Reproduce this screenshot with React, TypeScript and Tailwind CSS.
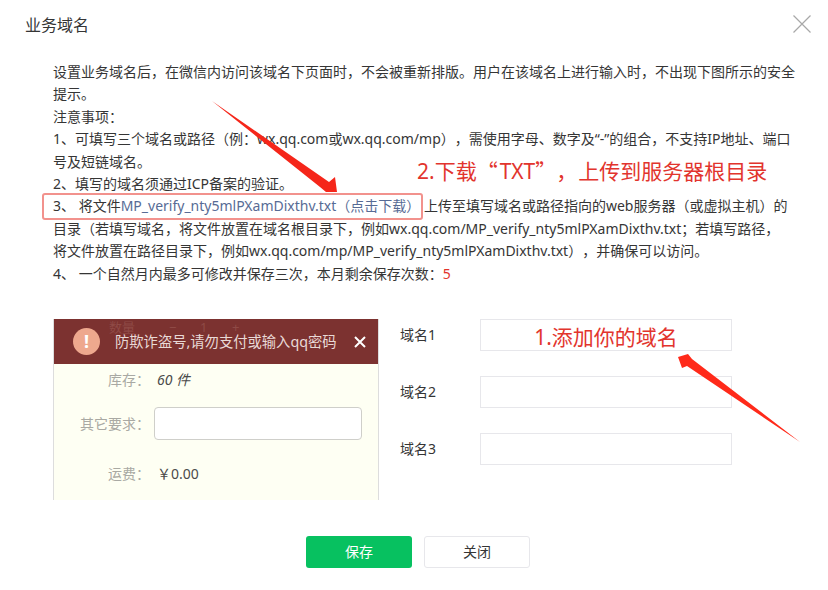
const font = { fontFamily: '"Noto Sans", "Noto Sans CJK SC", sans-serif' };
const cjkFont = { fontFamily: '"Noto Sans CJK SC", sans-serif' };

function DomainRow({ label, note }: { label: string; note?: string }) {
  return (
    <div className="flex items-center h-[32px]">
      <span className="w-[80px] text-[14px] text-[#353535] -mt-[2px]">{label}</span>
      <div className="w-[252px] h-[32px] border border-[#e7e7eb] bg-white flex items-center justify-center pt-[5px] text-[21px] text-[#e2342d]">
        {note}
      </div>
    </div>
  );
}

function Preview() {
  return (
    <div className="relative w-[326px] h-[181px] bg-[#fefff3] border-x border-[#dddddd] overflow-hidden">
      <div className="relative h-[45px] bg-[#7c3230] flex items-center pl-[19px] pr-[12px]">
        <div className="absolute left-[55px] top-[1px] flex text-[13px] leading-[14px] text-[#8f4a46]">
          <span className="w-[60px]">数量</span>
          <span className="w-[31px]">−</span>
          <span className="w-[32px]">1</span>
          <span>+</span>
        </div>
        <div className="relative w-[27px] h-[27px] rounded-full bg-[#eea88e] flex items-center justify-center text-white font-bold text-[18px]">!</div>
        <span className="relative ml-[15px] mt-[2px] text-[14.3px] leading-none text-[#e9d9d6]">防欺诈盗号,请勿支付或输入qq密码</span>
        <svg className="ml-auto" width="12" height="12" viewBox="0 0 12 12">
          <path d="M1 1 L11 11 M11 1 L1 11" stroke="#ffffff" strokeWidth="2" />
        </svg>
      </div>
      <div className="mt-[4px] flex items-center h-[22px] text-[14px]">
        <span className="w-[96px] text-right text-[#a9a9a3]">库存：</span>
        <span className="ml-[7px] text-[#4a4a4a] italic">60 件</span>
      </div>
      <div className="mt-[17px] flex items-center">
        <span className="w-[96px] text-right text-[14px] text-[#a9a9a3]">其它要求：</span>
        <div className="ml-[4px] w-[208px] h-[33px] rounded-[4px] border border-[#cfcfca] bg-white" />
      </div>
      <div className="mt-[22px] flex items-center h-[22px] text-[14px]">
        <span className="w-[96px] text-right text-[#a9a9a3]">运费：</span>
        <span className="ml-[7px] text-[#4a4a4a]">￥0.00</span>
      </div>
    </div>
  );
}

export default function App() {
  return (
    <div className="relative w-[828px] h-[590px] bg-white overflow-hidden [text-spacing-trim:space-all]" style={font}>
      <div className="flex items-start justify-between pl-[25px] pr-[17px] pt-[13px] h-[61px]">
        <h1 className="text-[16px] leading-[24px] text-[#353535] font-normal">业务域名</h1>
        <svg className="mt-[2px]" width="18" height="18" viewBox="0 0 18 18">
          <path d="M0.5 0.5 L17.5 17.5 M17.5 0.5 L0.5 17.5" stroke="#a8a8a8" strokeWidth="1.2" fill="none" />
        </svg>
      </div>

      <div className="pl-[53px] w-[800px] text-[14px] leading-[22.4px] text-[#353535]">
        <p>设置业务域名后，在微信内访问该域名下页面时，不会被重新排版。用户在该域名上进行输入时，不出现下图所示的安全</p>
        <p>提示。</p>
        <p>注意事项：</p>
        <p>1、可填写三个域名或路径（例：wx.qq.com或wx.qq.com/mp），需使用字母、数字及“-”的组合，不支持IP地址、端口</p>
        <p>号及短链域名。</p>
        <p>2、填写的域名须通过ICP备案的验证。</p>
        <p>
          3、 将文件<span className="text-[#576b95]">MP_verify_nty5mlPXamDixthv.txt（点击下载）</span> 上传至填写域名或路径指向的web服务器（或虚拟主机）的
        </p>
        <p>目录（若填写域名，将文件放置在域名根目录下，例如wx.qq.com/MP_verify_nty5mlPXamDixthv.txt；若填写路径，</p>
        <p>将文件放置在路径目录下，例如wx.qq.com/mp/MP_verify_nty5mlPXamDixthv.txt），并确保可以访问。</p>
        <p>
          4、 一个自然月内最多可修改并保存三次，本月剩余保存次数：<span className="text-[#e2342d]">5</span>
        </p>
      </div>

      <div className="flex pl-[53px] mt-[34px]">
        <Preview />
        <div className="ml-[21px] flex flex-col gap-[25px]">
          <DomainRow label="域名1" note="1.添加你的域名" />
          <DomainRow label="域名2" />
          <DomainRow label="域名3" />
        </div>
      </div>

      <div className="flex justify-center gap-[12px] mt-[36px] pl-[8px]">
        <button className="w-[106px] h-[32px] pb-[2px] rounded-[3px] bg-[#07c160] text-white text-[14px]">保存</button>
        <button className="w-[106px] h-[32px] pb-[2px] rounded-[3px] border border-[#e7e7eb] bg-white text-[#353535] text-[14px]">关闭</button>
      </div>

      {/* annotations drawn on top of the screenshot */}
      <div className="absolute left-[42px] top-[193px] w-[381px] h-[27px] rounded-[3px] border-2 border-[#f2928d]" />
      <span className="absolute left-[417px] top-[154px] text-[21px] leading-[32px] text-[#e2342d] whitespace-nowrap">
        2.下载<span style={cjkFont}>“</span><span className="ml-[2px]">TXT</span><span style={cjkFont}>”</span><span style={cjkFont}>，</span><span className="ml-[1px]">上传到服务器根目录</span>
      </span>
      <svg className="absolute left-0 top-0 pointer-events-none" width="828" height="590">
        <polygon points="212,101 329,182 335,177 337,192 326,192 320,187" fill="#f5261a" />
        <polygon points="800,442 692,359 688,354 678,357 682,368 687,366" fill="#ff2a1a" />
      </svg>
    </div>
  );
}
